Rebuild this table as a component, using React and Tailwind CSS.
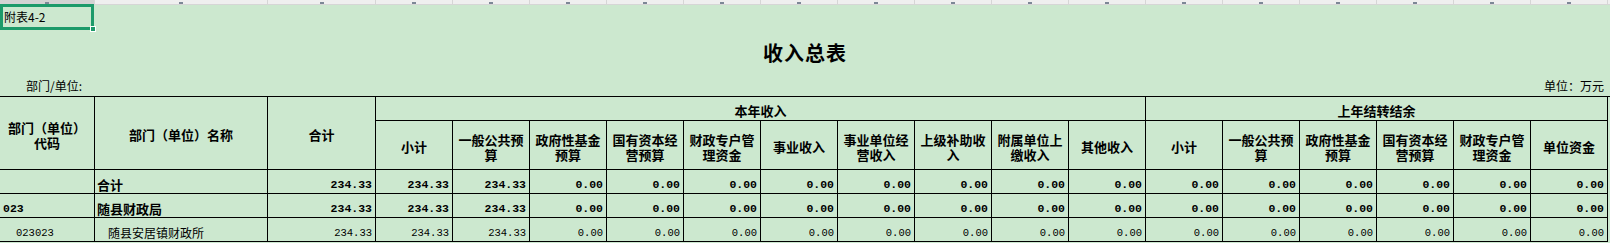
import React from "react";

const cjk = "font-['Noto_Sans_CJK_SC','Noto_Sans',sans-serif]";
const mono = "font-['Liberation_Mono','DejaVu_Sans_Mono',monospace]";

const stripCols = Array.from({ length: 19 }, (_, i) => i);

const thisYear = [
    ["小计"],
    ["一般公共预", "算"],
    ["政府性基金", "预算"],
    ["国有资本经", "营预算"],
    ["财政专户管", "理资金"],
    ["事业收入"],
    ["事业单位经", "营收入"],
    ["上级补助收", "入"],
    ["附属单位上", "缴收入"],
    ["其他收入"],
];

const lastYear = [
    ["小计"],
    ["一般公共预", "算"],
    ["政府性基金", "预算"],
    ["国有资本经", "营预算"],
    ["财政专户管", "理资金"],
    ["单位资金"],
];

const rows = [
    { code: "", name: "合计", bold: true, values: ["234.33", "234.33", "234.33", ...Array(14).fill("0.00")] },
    { code: "023", name: "随县财政局", bold: true, values: ["234.33", "234.33", "234.33", ...Array(14).fill("0.00")] },
    { code: "023023", name: "随县安居镇财政所", bold: false, values: ["234.33", "234.33", "234.33", ...Array(14).fill("0.00")] },
];

function HeadCell({ lines, className = "" }) {
    return (
        <div className={`border-r border-b border-black flex items-center justify-center text-center pt-[3px] ${className}`}>
            <div className="font-bold text-[13px] leading-[15px]">
                {lines.map((l, i) => (
                    <div key={i}>{l}</div>
                ))}
            </div>
        </div>
    );
}

export default function App() {
    return (
        <div className={`w-[1610px] h-[243px] bg-[#cce8cf] overflow-hidden text-black ${cjk}`}>
            {/* column header strip */}
            <div className="grid grid-cols-[95px_173px_108px_repeat(16,77px)] h-[5px] bg-[#efefef] border-b border-[#d6d6d6]">
                {stripCols.map((i) => (
                    <div
                        key={i}
                        className={`border-r border-[#d6d6d6] flex justify-center items-end ${i === 0 ? "bg-[#d3d3d3]" : ""}`}
                    >
                        <div className="w-[4px] h-[2px] bg-[#7d8796]" />
                    </div>
                ))}
            </div>

            {/* selected cell */}
            <div className="h-[25px] flex">
                <div className="relative w-[94px] h-[26px] -mt-[1px] border-[3px] border-[#1c9a6a] flex items-center pl-[1px]">
                    <span className="text-[12px] leading-none">附表4-2</span>
                    <div className="absolute -right-[5px] -bottom-[5px] w-[6px] h-[6px] bg-[#1c9a6a] border border-white" />
                </div>
            </div>

            {/* title */}
            <div className="h-[46px] flex items-center justify-center">
                <span className="text-[20px] font-bold tracking-[1px] leading-none">收入总表</span>
            </div>

            {/* unit line */}
            <div className="h-[20px] flex items-center justify-between pl-[26px] pr-[6px] text-[12px]">
                <span>部门/单位:</span>
                <span>单位：万元</span>
            </div>

            {/* table */}
            <div className="grid grid-cols-[95px_173px_108px_repeat(16,77px)] grid-rows-[24px_49px_24px_24px_24px] border-t border-black">
                <HeadCell lines={["部门（单位）", "代码"]} className="row-span-2" />
                <HeadCell lines={["部门（单位）名称"]} className="row-span-2" />
                <HeadCell lines={["合计"]} className="row-span-2" />
                <HeadCell lines={["本年收入"]} className="col-span-10" />
                <HeadCell lines={["上年结转结余"]} className="col-span-6" />
                {thisYear.map((lines, i) => (
                    <HeadCell key={"t" + i} lines={lines} />
                ))}
                {lastYear.map((lines, i) => (
                    <HeadCell key={"l" + i} lines={lines} />
                ))}

                {rows.map((row) => (
                    <React.Fragment key={row.name}>
                        <div
                            className={`border-r border-b border-black flex items-end pb-[3px] ${mono} ${
                                row.bold ? "pl-[3px] font-bold text-[11.5px]" : "pl-[16px] text-[10.5px]"
                            }`}
                        >
                            <span className="leading-none">{row.code}</span>
                        </div>
                        <div
                            className={`border-r border-b border-black flex items-end pb-[2px] ${
                                row.bold ? "pl-[2px] font-bold text-[13px]" : "pl-[13px] text-[12px]"
                            }`}
                        >
                            <span className="leading-none">{row.name}</span>
                        </div>
                        {row.values.map((v, i) => (
                            <div
                                key={i}
                                className={`border-r border-b border-black flex items-end justify-end pr-[3px] pb-[3px] ${mono} ${
                                    row.bold ? "font-bold text-[11.5px]" : "text-[10.5px]"
                                }`}
                            >
                                <span className="leading-none">{v}</span>
                            </div>
                        ))}
                    </React.Fragment>
                ))}
            </div>
        </div>
    );
}
